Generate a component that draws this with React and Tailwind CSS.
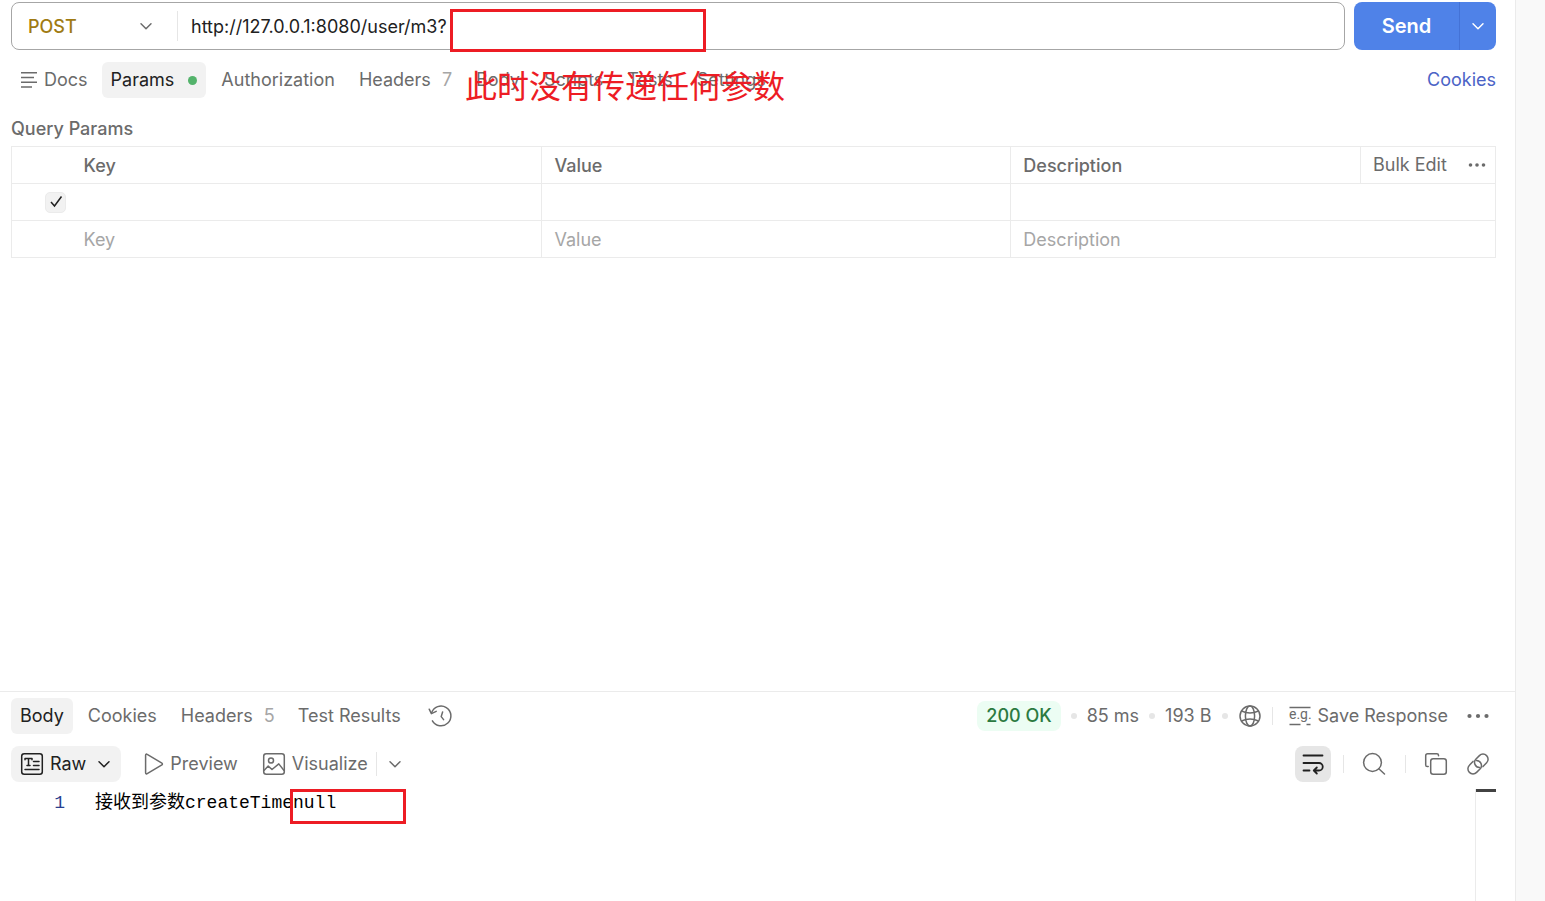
import React from 'react';

const fontSans = "font-['Inter','Noto_Sans_CJK_SC',sans-serif]";

const Icon = ({ children, className = 'w-6 h-6', width = 1.5 }) => (
  <svg
    className={`${className} shrink-0`}
    viewBox="0 0 24 24"
    fill="none"
    stroke="currentColor"
    strokeWidth={width}
    strokeLinecap="round"
    strokeLinejoin="round"
    overflow="visible"
    aria-hidden="true"
  >
    {children}
  </svg>
);

const ChevronIcon = () => (
  <Icon className="w-4 h-4" width={2.2}>
    <path d="M4.5 8.5l7.5 7.5 7.5-7.5" />
  </Icon>
);

const DocsIcon = () => (
  <svg className="w-4 h-4 shrink-0" viewBox="0 0 16 16" stroke="currentColor" strokeWidth="1.4" aria-hidden="true">
    <path d="M0 .8h16M0 5.5h13M0 10.3h16M0 15h11" />
  </svg>
);

const HistoryIcon = () => (
  <Icon>
    <path d="M2.6 8.8A9.9 9.9 0 1 1 3.4 16.8" />
    <path d="M.2 5.2l2.2 4.4 4.8-2.2" />
    <path d="M13.6 8l-1.4 4.6 2.4 3" />
  </Icon>
);

const RawIcon = () => (
  <Icon>
    <rect x="1.7" y="1.7" width="20.6" height="20.6" rx="2.5" />
    <path d="M5 7.8V6.5h7v1.3M8.5 6.5v7M7 13.5h3M13.5 9.5H19M13.5 13.5H19M5 17.5h14" />
  </Icon>
);

const PlayIcon = () => (
  <Icon>
    <path d="M3.6 3.2v17.6c0 .9.9 1.4 1.6.9l14.7-8.8c.7-.4.7-1.4 0-1.8L5.2 2.3c-.7-.5-1.6 0-1.6.9z" />
  </Icon>
);

const ImageIcon = () => (
  <Icon>
    <rect x="1.7" y="1.7" width="20.6" height="20.6" rx="2.5" />
    <circle cx="9" cy="8.6" r="2.5" />
    <path d="M2 18.5l4.2-4.4 3.8 3.4 6.8-5.6 5.2 6.6" />
  </Icon>
);

const GlobeIcon = () => (
  <Icon>
    <circle cx="12" cy="12" r="10" />
    <ellipse cx="12" cy="12" rx="4.6" ry="10" />
    <path d="M3.6 7c5 2.4 11.8 2.4 16.8 0M3.6 17c5-2.4 11.8-2.4 16.8 0" />
  </Icon>
);

const ExampleIcon = () => (
  <svg className="w-6 h-6 shrink-0" viewBox="0 0 24 24" fill="none" stroke="currentColor" strokeWidth="1.4" aria-hidden="true">
    <path d="M1.5 3.5h21M1.5 20.5h11M18.5 20.5h4" />
    <text x="1" y="15" fontSize="14" stroke="none" fill="currentColor" fontFamily="Roboto, sans-serif">
      e.g.
    </text>
  </svg>
);

const DotsIcon = () => (
  <svg className="w-6 h-6 shrink-0" viewBox="0 0 24 24" fill="currentColor" aria-hidden="true">
    <circle cx="3.5" cy="12" r="2.1" />
    <circle cx="12" cy="12" r="2.1" />
    <circle cx="20.5" cy="12" r="2.1" />
  </svg>
);

const WrapIcon = () => (
  <Icon width={1.8}>
    <path d="M2.5 3.5h19M2.5 11h15.5a3.7 3.7 0 0 1 0 7.5H13M2.5 18.5h6M15.8 15.5l-3 3 3 3" />
  </Icon>
);

const SearchIcon = () => (
  <Icon>
    <circle cx="10.5" cy="10.5" r="8.9" />
    <path d="M16.8 16.8l5.7 5.2" />
  </Icon>
);

const CopyIcon = () => (
  <Icon>
    <rect x="6.7" y="6.7" width="15.6" height="15.6" rx="2.5" />
    <path d="M14.5 3.7v-.4c0-1-.6-1.600-1.600-1.600H3.700c-1.200 0-2 .8-2 2v9.200c0 1 .6 1.600 1.600 1.600h.9" />
  </Icon>
);

const LinkIcon = () => (
  <Icon>
    <path d="M17 14.600l3.600-3.800a5 5 0 0 0-7.200-7.200l-3.400 3.400a5 5 0 0 0 3.500 8.500" />
    <path d="M7 9.400l-3.600 3.800a5 5 0 0 0 7.200 7.200l3.400-3.400a5 5 0 0 0-3.500-8.500" />
  </Icon>
);

const Divider = () => <span className="w-px h-[18px] bg-[#e6e6e6]" />;
const Dot = () => <span className="w-1.5 h-1.5 rounded-full bg-[#e6e6e6]" />;

const RequestBar = () => (
  <div className="flex gap-[9px]">
    <div className="relative flex flex-1 items-center h-12 border border-[#a6a6a6] rounded-lg">
      <div className="relative flex items-center w-[165px] text-[#a07b13]">
        <select aria-label="Method" className="appearance-none w-full h-8 pt-0.5 pl-4 bg-transparent font-medium outline-none">
          <option>POST</option>
        </select>
        <span className="absolute right-[23px] text-[#6b6b6b] pointer-events-none">
          <ChevronIcon />
        </span>
      </div>
      <span className="w-px h-[30px] bg-[#e6e6e6]" />
      <input
        aria-label="Request URL"
        defaultValue="http://127.0.0.1:8080/user/m3?"
        className="flex-1 min-w-0 h-8 px-[13px] text-[#212121] outline-none"
      />
      <div className="absolute left-[438px] top-1.5 w-64 h-[43px] border-3 border-[#ed1c24] pointer-events-none" />
    </div>
    <div className="flex h-12 rounded-lg overflow-hidden bg-[#4f82e8] text-white">
      <button className="w-[105px] text-xl font-semibold">Send</button>
      <button aria-label="Send options" className="flex items-center justify-center w-[37px] border-l border-[#4472d6]">
        <ChevronIcon />
      </button>
    </div>
  </div>
);

const RequestTabs = () => (
  <div className="relative flex items-center mt-3 h-9">
    <button className="flex items-center gap-[7px] pl-2.5">
      <DocsIcon />
      Docs
    </button>
    <button className="flex items-center gap-3.5 h-9 ml-3.5 px-[9px] rounded-md bg-[#f2f2f2] text-[#212121]">
      Params
      <span className="w-[9px] h-[9px] rounded-full bg-[#53b36b]" />
    </button>
    <button className="ml-[15px]">Authorization</button>
    <button className="ml-6">
      Headers <span className="ml-1.5 text-[#a6a6a6]">7</span>
    </button>
    <button className="ml-6">Body</button>
    <button className="ml-6">Scripts</button>
    <button className="ml-6">Tests</button>
    <button className="ml-6">Settings</button>
    <a href="#cookies" className="ml-auto text-[#4b63c6]">Cookies</a>
    <div className="absolute left-[454px] top-0 text-[32px] leading-[50px] text-[#ed1c24] whitespace-nowrap pointer-events-none">
      此时没有传递任何参数
    </div>
  </div>
);

const cell = 'border-y border-[#ebebeb] px-3';

const ParamsTable = () => (
  <table className="w-full table-fixed border-collapse border border-[#ebebeb] text-left">
    <colgroup>
      <col className="w-[60px]" />
      <col className="w-[31.7%]" />
      <col className="w-[31.6%]" />
      <col />
      <col className="w-[135px]" />
    </colgroup>
    <thead>
      <tr className="h-[37px]">
        <td className="border-y border-[#ebebeb]" />
        <th className={`${cell} pt-0.5 border-r font-medium`}>Key</th>
        <th className={`${cell} pt-0.5 border-r font-medium`}>Value</th>
        <th className={`${cell} pt-0.5 border-r font-medium`}>Description</th>
        <th className={`${cell} pr-2 font-normal`}>
          <div className="flex items-center justify-between">
            <button>Bulk Edit</button>
            <button aria-label="More options" className="flex">
              <svg className="w-5 h-5" viewBox="0 0 20 20" fill="currentColor" aria-hidden="true">
                <circle cx="3.5" cy="10" r="1.8" />
                <circle cx="10" cy="10" r="1.8" />
                <circle cx="16.5" cy="10" r="1.8" />
              </svg>
            </button>
          </div>
        </th>
      </tr>
    </thead>
    <tbody>
      <tr className="h-[37px]">
        <td className="border-y border-[#ebebeb]">
          <label className="relative flex items-center justify-center w-[21px] h-[21px] ml-[33px] text-[#212121]">
            <input
              type="checkbox"
              defaultChecked
              aria-label="Enable parameter"
              className="peer appearance-none w-full h-full rounded-[5px] border border-[#ebebeb] bg-[#f2f2f2]"
            />
            <svg className="absolute w-4 h-4 hidden peer-checked:block pointer-events-none" viewBox="0 0 16 16" fill="none" stroke="currentColor" strokeWidth="1.5" aria-hidden="true">
              <path d="M3 8l3.5 4 7-9.5" />
            </svg>
          </label>
        </td>
        <td className={`${cell} border-r`} />
        <td className={`${cell} border-r`} />
        <td className={cell} colSpan={2} />
      </tr>
      <tr className="h-[37px]">
        <td className="border-y border-[#ebebeb]" />
        <td className={`${cell} pt-0.5 border-r`}>
          <input aria-label="Key" placeholder="Key" className="block w-full placeholder:text-[#a6a6a6] outline-none" />
        </td>
        <td className={`${cell} pt-0.5 border-r`}>
          <input aria-label="Value" placeholder="Value" className="block w-full placeholder:text-[#a6a6a6] outline-none" />
        </td>
        <td className={`${cell} pt-0.5`} colSpan={2}>
          <input aria-label="Description" placeholder="Description" className="block w-full placeholder:text-[#a6a6a6] outline-none" />
        </td>
      </tr>
    </tbody>
  </table>
);

const ResponseTabs = () => (
  <div className="flex items-center h-9">
    <button className="h-9 px-[9px] rounded-md bg-[#f2f2f2] text-[#212121]">Body</button>
    <button className="ml-[15px]">Cookies</button>
    <button className="ml-6">
      Headers <span className="ml-1.5 text-[#a6a6a6]">5</span>
    </button>
    <button className="ml-[23px]">Test Results</button>
    <button aria-label="History" className="ml-7">
      <HistoryIcon />
    </button>

    <div className="flex items-center gap-2.5 ml-auto">
      <span className="flex items-center h-[30px] px-[9px] rounded-lg bg-[#ecfdf3] text-[#2b7a41] font-medium">200 OK</span>
      <Dot />
      <span>85 ms</span>
      <Dot />
      <span>193 B</span>
      <Dot />
      <button aria-label="Network">
        <GlobeIcon />
      </button>
      <Divider />
    </div>
    <button className="flex items-center gap-1.5 ml-[15px]">
      <ExampleIcon />
      Save Response
    </button>
    <button aria-label="More actions" className="ml-[18px] mr-1.5">
      <DotsIcon />
    </button>
  </div>
);

const ResponseToolbar = () => (
  <div className="flex items-center mt-3 h-9">
    <button className="flex items-center h-9 px-[9px] rounded-lg bg-[#f2f2f2] text-[#212121]">
      <RawIcon />
      <span className="ml-1.5 mr-2.5">Raw</span>
      <ChevronIcon />
    </button>
    <button className="flex items-center gap-1 ml-[21px]">
      <PlayIcon />
      Preview
    </button>
    <button className="flex items-center gap-1.5 ml-6">
      <ImageIcon />
      Visualize
    </button>
    <span className="w-px h-6 ml-2 bg-[#e6e6e6]" />
    <button aria-label="Visualize options" className="ml-2.5">
      <ChevronIcon />
    </button>

    <div className="flex items-center ml-auto mr-1.5">
      <button aria-label="Wrap lines" className="flex items-center justify-center w-9 h-9 mr-3 rounded-lg bg-[#e6e6e6] text-[#212121]">
        <WrapIcon />
      </button>
      <Divider />
      <button aria-label="Search" className="ml-[18px] mr-[19px]">
        <SearchIcon />
      </button>
      <Divider />
      <button aria-label="Copy" className="mx-[18px]">
        <CopyIcon />
      </button>
      <button aria-label="Copy link">
        <LinkIcon />
      </button>
    </div>
  </div>
);

const ResponseBody = () => (
  <div className="flex flex-1 mt-[7px] font-['Liberation_Mono','Noto_Sans_CJK_SC',monospace]">
    <span className="w-[54px] pt-0.5 text-right text-[#2a3f8f]">1</span>
    <pre className="relative flex-1 pl-[30px] pt-0.5 font-[inherit] text-black">
      接收到参数createTimenull
      <span className="absolute left-[225px] top-0 w-[116px] h-[35px] border-3 border-[#ed1c24] pointer-events-none" />
    </pre>
    <div className="w-[21px] border-l border-[#ebebeb]">
      <div className="h-[3px] bg-[#424242]" />
    </div>
  </div>
);

const App = () => {
  return (
    <div className={`flex min-h-screen bg-white text-lg leading-6 text-[#6b6b6b] ${fontSans}`}>
      <main className="flex flex-col flex-1 min-w-0">
        {/* Request */}
        <section className="flex-1 pt-0.5 pl-[11px] pr-[19px]">
          <RequestBar />
          <RequestTabs />
          <h2 className="mt-[19px] mb-[5px] font-medium">Query Params</h2>
          <ParamsTable />
        </section>

        {/* Response */}
        <section className="flex flex-col min-h-[210px] pt-1.5 pl-[11px] pr-[19px] border-t border-[#ebebeb]">
          <ResponseTabs />
          <ResponseToolbar />
          <ResponseBody />
        </section>
      </main>
      <aside className="w-[30px] border-l border-[#ebebeb] bg-[#f9f9f9]" />
    </div>
  );
};

export default App;
